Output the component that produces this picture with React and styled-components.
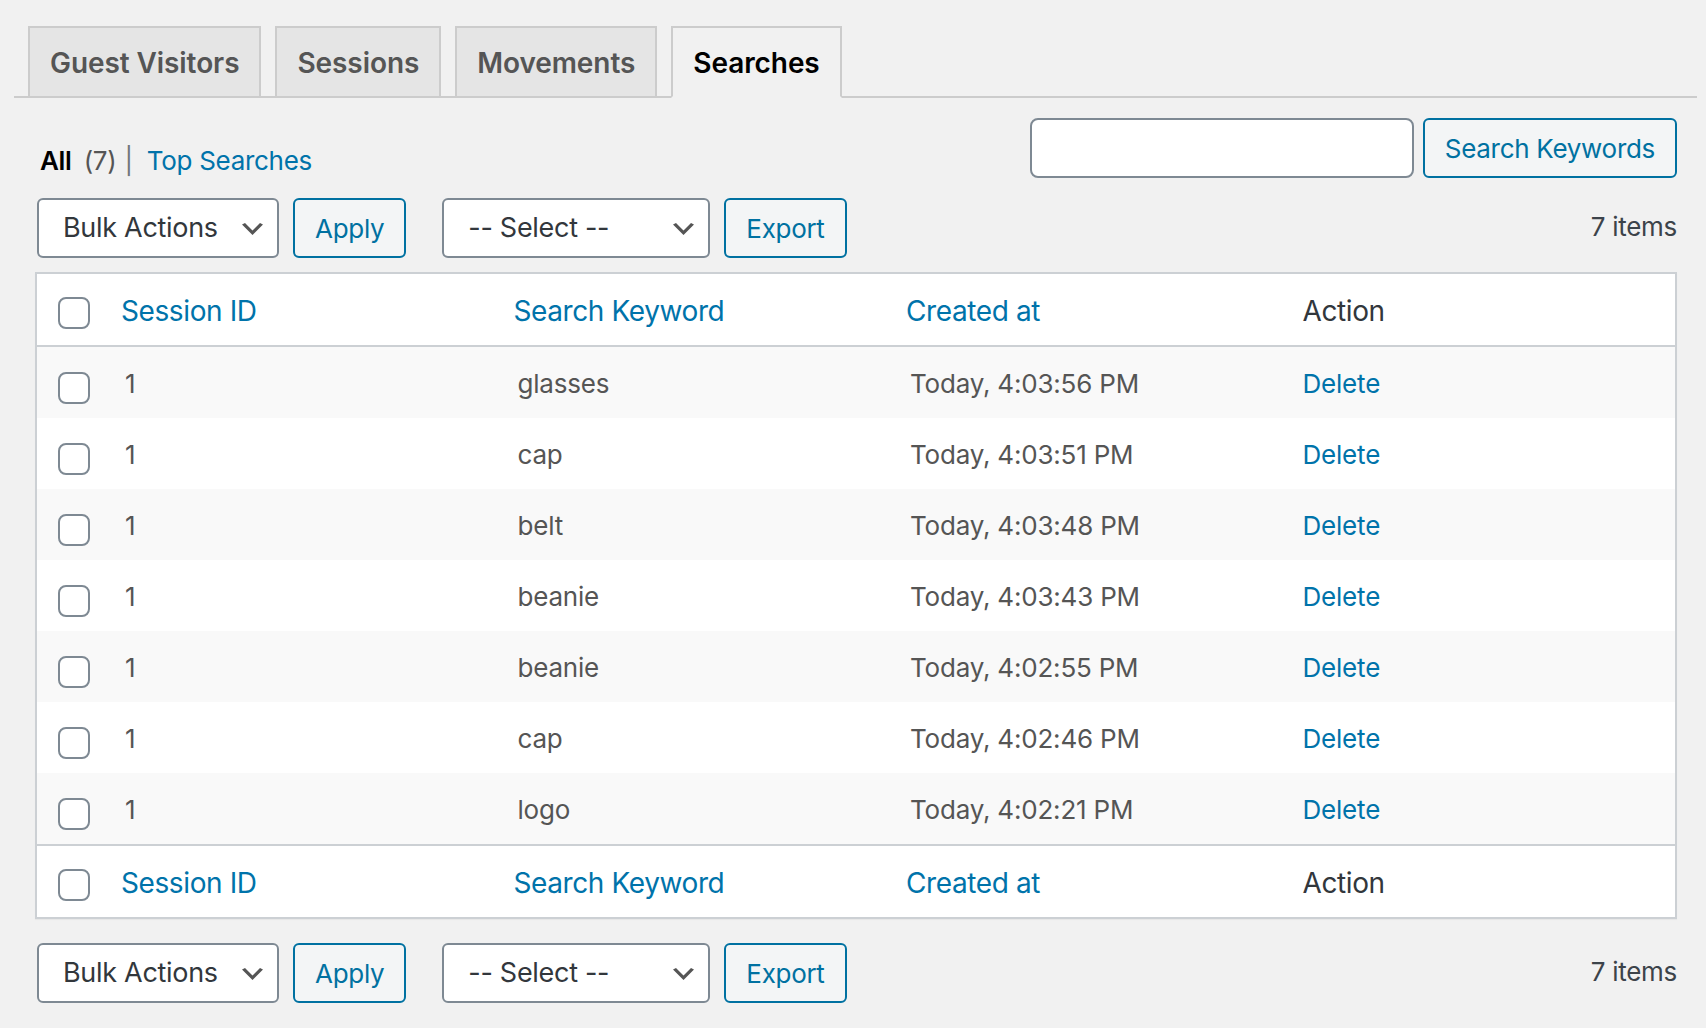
import React from "react";
import styled, { createGlobalStyle } from "styled-components";

const Global = createGlobalStyle`
  html, body { margin: 0; padding: 0; background: #f1f1f1; }
  body {
    font-family: Inter, "Noto Sans", "Liberation Sans", sans-serif;
    color: #32373c;
    letter-spacing: -0.3px;
  }
  * { box-sizing: border-box; }
`;

const Page = styled.div`
  padding: 0 9px 0 14px;
  min-height: 1028px;
`;

const TabBar = styled.nav`
  display: flex;
  gap: 14px;
  padding: 26px 0 0 14px;
  border-bottom: 2px solid #ccc;
`;

const Tab = styled.a`
  display: block;
  margin-bottom: -2px;
  padding: 11px 20px 9px;
  border: 2px solid #ccc;
  border-bottom-color: ${(p) => (p.$active ? "#f1f1f1" : "#ccc")};
  background: ${(p) => (p.$active ? "#f1f1f1" : "#e5e5e5")};
  color: ${(p) => (p.$active ? "#000" : "#555")};
  font-size: 28px;
  font-weight: 600;
  line-height: 48px;
  letter-spacing: -0.08px;
  text-decoration: none;
  white-space: nowrap;
`;

const Content = styled.div`
  padding: 0 20px 0 21px;
`;

const TopRow = styled.div`
  display: flex;
  justify-content: space-between;
  align-items: flex-start;
  margin-top: 20px;
  height: 60px;
`;

const SubNav = styled.ul`
  display: flex;
  align-items: baseline;
  list-style: none;
  margin: 23px 0 0;
  padding: 0 0 0 5px;
  font-size: 26px;
  line-height: 40px;
  color: #555;
`;

const Current = styled.span`
  color: #000;
  font-weight: 600;
`;

const Count = styled.span`
  margin-left: 12px;
  color: #555;
`;

const Sep = styled.span`
  margin: 0 14px 0 8px;
  color: #72777c;
`;

const Link = styled.a`
  color: #0073aa;
  text-decoration: none;
`;

const SearchBox = styled.div`
  display: flex;
  gap: 9px;
`;

const SearchInput = styled.input`
  width: 384px;
  height: 60px;
  margin: 0;
  padding: 0 16px;
  border: 2px solid #7e8993;
  border-radius: 8px;
  background: #fff;
  font: inherit;
  font-size: 28px;
  outline: none;
`;

const Button = styled.button`
  height: 60px;
  margin: 0;
  padding: 1px 20px 0;
  border: 2px solid #0071a1;
  border-radius: 6px;
  background: #f3f5f6;
  color: #0071a1;
  font-family: inherit;
  font-size: 26px;
  letter-spacing: -0.3px;
  line-height: 55px;
  white-space: nowrap;
  cursor: pointer;
`;

const TableNav = styled.div`
  display: flex;
  align-items: center;
  height: 60px;
  margin-top: ${(p) => p.$top}px;
  padding-left: 2px;
`;

const SelectWrap = styled.div`
  position: relative;
  width: ${(p) => p.$w}px;
  height: 60px;
  margin-left: ${(p) => p.$ml || 0}px;
  margin-right: 14px;
`;

const Select = styled.select`
  appearance: none;
  -webkit-appearance: none;
  width: 100%;
  height: 60px;
  margin: 0;
  padding: 0 48px 0 24px;
  border: 2px solid #7e8993;
  border-radius: 6px;
  background: #fff;
  color: #32373c;
  font-family: inherit;
  font-size: 27px;
  letter-spacing: -0.3px;
  line-height: 56px;
  outline: none;
`;

const Chevron = styled.svg`
  position: absolute;
  right: 16px;
  top: 25px;
  width: 21px;
  height: 12px;
  pointer-events: none;
`;

const ItemsCount = styled.span`
  margin-left: auto;
  padding-bottom: 4px;
  font-size: 26px;
  color: #3c434a;
`;

const Table = styled.table`
  width: 100%;
  margin-top: 14px;
  border: 2px solid #ccd0d4;
  border-spacing: 0;
  table-layout: fixed;
  background: #fff;
  box-shadow: 0 1px 1px rgba(0, 0, 0, 0.04);
`;

const HeadCell = styled.th`
  height: 71px;
  padding: ${(p) => (p.$sortable ? "0" : "18px 20px 14px")};
  text-align: left;
  font-weight: 400;
  font-size: 28px;
  line-height: 39px;
  letter-spacing: -0.4px;
  color: #32373c;
  border-bottom: ${(p) => (p.$foot ? "0" : "2px solid #ccd0d4")};
  border-top: ${(p) => (p.$foot ? "2px solid #ccd0d4" : "0")};
`;

const SortLink = styled.a`
  display: block;
  padding: 18px 16px 14px;
  color: #0073aa;
  text-decoration: none;
`;

const CheckCell = styled.td`
  width: 68px;
  padding: ${(p) => p.$top}px 0 0 21px;
  vertical-align: top;
  border-bottom: ${(p) => (p.$head ? "2px solid #ccd0d4" : "0")};
  border-top: ${(p) => (p.$foot ? "2px solid #ccd0d4" : "0")};
`;

const Check = styled.input.attrs({ type: "checkbox" })`
  appearance: none;
  -webkit-appearance: none;
  display: block;
  width: 32px;
  height: 32px;
  margin: 0;
  border: 2px solid #7e8993;
  border-radius: 8px;
  background: #fff;
`;

const Row = styled.tr`
  background: ${(p) => (p.$striped ? "#f9f9f9" : "#fff")};
`;

const Cell = styled.td`
  height: 71px;
  padding: 17px 20px 15px;
  font-size: 26px;
  line-height: 39px;
  letter-spacing: -0.2px;
  color: #555;
  vertical-align: top;
`;

const DeleteLink = styled.a`
  color: #0073aa;
  text-decoration: none;
`;

const rows = [
  ["glasses", "Today, 4:03:56 PM"],
  ["cap", "Today, 4:03:51 PM"],
  ["belt", "Today, 4:03:48 PM"],
  ["beanie", "Today, 4:03:43 PM"],
  ["beanie", "Today, 4:02:55 PM"],
  ["cap", "Today, 4:02:46 PM"],
  ["logo", "Today, 4:02:21 PM"],
];

function ChevronIcon() {
  return (
    <Chevron viewBox="3 6 14 8" preserveAspectRatio="none">
      <path d="M5 6l5 5 5-5 2 1-7 7-7-7 2-1z" fill="#555" />
    </Chevron>
  );
}

function Nav({ top }) {
  return (
    <TableNav $top={top}>
      <SelectWrap $w={242}>
        <Select defaultValue="-1">
          <option value="-1">Bulk Actions</option>
          <option value="delete">Delete</option>
        </Select>
        <ChevronIcon />
      </SelectWrap>
      <Button>Apply</Button>
      <SelectWrap $w={268} $ml={36}>
        <Select defaultValue="">
          <option value="">-- Select --</option>
          <option value="csv">CSV</option>
        </Select>
        <ChevronIcon />
      </SelectWrap>
      <Button>Export</Button>
      <ItemsCount>7 items</ItemsCount>
    </TableNav>
  );
}

function HeaderRow({ foot }) {
  return (
    <tr>
      <CheckCell $top={23} $head={!foot} $foot={foot}>
        <Check />
      </CheckCell>
      <HeadCell $sortable $foot={foot}>
        <SortLink href="#">Session ID</SortLink>
      </HeadCell>
      <HeadCell $sortable $foot={foot}>
        <SortLink href="#">Search Keyword</SortLink>
      </HeadCell>
      <HeadCell $sortable $foot={foot}>
        <SortLink href="#">Created at</SortLink>
      </HeadCell>
      <HeadCell $foot={foot}>Action</HeadCell>
    </tr>
  );
}

export default function App() {
  return (
    <>
      <Global />
      <Page>
        <TabBar>
          <Tab href="#">Guest Visitors</Tab>
          <Tab href="#">Sessions</Tab>
          <Tab href="#">Movements</Tab>
          <Tab href="#" $active>Searches</Tab>
        </TabBar>
        <Content>
          <TopRow>
            <SubNav>
              <li>
                <Current>All</Current>
                <Count>(7)</Count>
                <Sep>|</Sep>
              </li>
              <li>
                <Link href="#">Top Searches</Link>
              </li>
            </SubNav>
            <SearchBox>
              <SearchInput type="search" />
              <Button>Search Keywords</Button>
            </SearchBox>
          </TopRow>
          <Nav top={20} />
          <Table>
            <thead>
              <HeaderRow />
            </thead>
            <tbody>
              {rows.map(([kw, date], i) => (
                <Row key={i} $striped={i % 2 === 0}>
                  <CheckCell $top={25}>
                    <Check />
                  </CheckCell>
                  <Cell>1</Cell>
                  <Cell>{kw}</Cell>
                  <Cell>{date}</Cell>
                  <Cell>
                    <DeleteLink href="#">Delete</DeleteLink>
                  </Cell>
                </Row>
              ))}
            </tbody>
            <tfoot>
              <HeaderRow foot />
            </tfoot>
          </Table>
          <Nav top={24} />
        </Content>
      </Page>
    </>
  );
}
